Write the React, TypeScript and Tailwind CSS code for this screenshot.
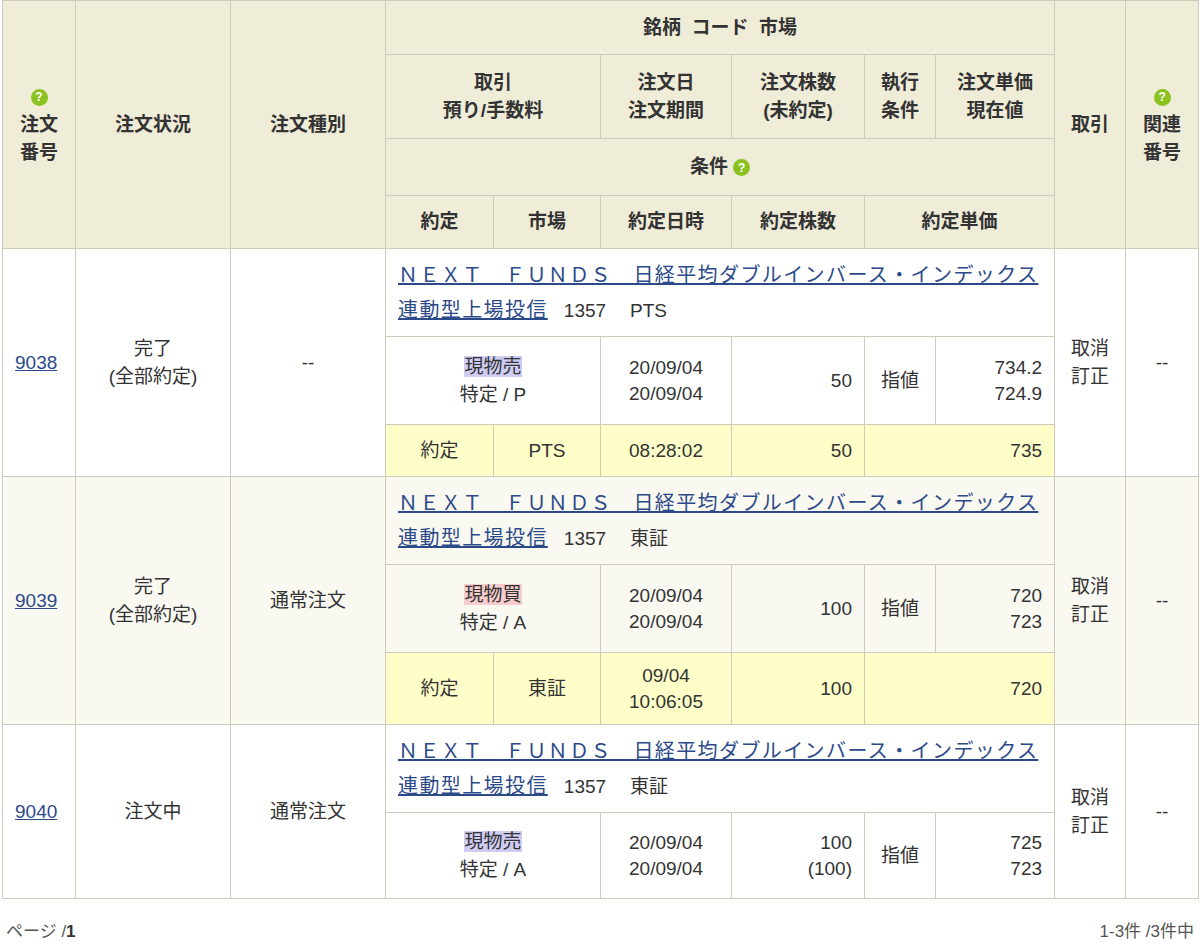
import React from 'react';

const th = 'border border-[#cfcbbb] bg-[#efecd8] font-semibold text-[#333] text-center align-middle';
const td = 'border border-[#cfcbbb] align-middle';

const Q = () => (
  <span className="inline-flex w-[17px] h-[17px] rounded-full bg-[#8cc21f] text-white text-[12px] font-bold items-center justify-center leading-none align-middle">?</span>
);

interface Order {
  no: string;
  status: string[];
  kind: string;
  market: string;
  side: string;
  sell: boolean;
  acct: string;
  qty: string[];
  price: string[];
  fill?: { market: string; time: string[]; qty: string; price: string };
  tint: boolean;
}

const ORDERS: Order[] = [
  { no: '9038', status: ['完了', '(全部約定)'], kind: '--', market: 'PTS', side: '現物売', sell: true, acct: '特定 / P', qty: ['50'], price: ['734.2', '724.9'], fill: { market: 'PTS', time: ['08:28:02'], qty: '50', price: '735' }, tint: false },
  { no: '9039', status: ['完了', '(全部約定)'], kind: '通常注文', market: '東証', side: '現物買', sell: false, acct: '特定 / A', qty: ['100'], price: ['720', '723'], fill: { market: '東証', time: ['09/04', '10:06:05'], qty: '100', price: '720' }, tint: true },
  { no: '9040', status: ['注文中'], kind: '通常注文', market: '東証', side: '現物売', sell: true, acct: '特定 / A', qty: ['100', '(100)'], price: ['725', '723'], tint: false },
];

function Rows({ o }: { o: Order }) {
  const bg = o.tint ? 'bg-[#f9f8f1]' : 'bg-white';
  const span = o.fill ? 3 : 2;
  return (
    <>
      <tr className="h-[88px]">
        <td rowSpan={span} className={`${td} ${bg} px-3`}>
          <a className="text-[#2c4a8a] underline">{o.no}</a>
        </td>
        <td rowSpan={span} className={`${td} ${bg} text-center`}>
          {o.status.map((s) => <div key={s}>{s}</div>)}
        </td>
        <td rowSpan={span} className={`${td} ${bg} text-center`}>{o.kind}</td>
        <td colSpan={6} className={`${td} ${bg} px-3 leading-[34px]`}>
          <a className="text-[#2c4a8a] underline text-[20px] tracking-[1.4px]">ＮＥＸＴ　ＦＵＮＤＳ　日経平均ダブルインバース・インデックス連動型上場投信</a>
          <span className="ml-4">1357</span>
          <span className="ml-6">{o.market}</span>
        </td>
        <td rowSpan={span} className={`${td} ${bg} text-center`}>
          <div>取消</div><div>訂正</div>
        </td>
        <td rowSpan={span} className={`${td} ${bg} text-center`}>--</td>
      </tr>
      <tr className={o.fill ? 'h-[88px]' : 'h-[86px]'}>
        <td colSpan={2} className={`${td} ${bg} text-center`}>
          <div><span className={o.sell ? 'bg-[#cfccf3]' : 'bg-[#f6cccc]'}>{o.side}</span></div>
          <div>{o.acct}</div>
        </td>
        <td className={`${td} ${bg} text-center leading-[26px]`}><div>20/09/04</div><div>20/09/04</div></td>
        <td className={`${td} ${bg} text-right px-3 leading-[26px]`}>{o.qty.map((q) => <div key={q}>{q}</div>)}</td>
        <td className={`${td} ${bg} text-center`}>指値</td>
        <td className={`${td} ${bg} text-right px-3 leading-[26px]`}>{o.price.map((q) => <div key={q}>{q}</div>)}</td>
      </tr>
      {o.fill && (
        <tr className={o.fill.time.length > 1 ? 'h-[72px]' : 'h-[52px]'}>
          <td className={`${td} bg-[#fefec8] text-center`}>約定</td>
          <td className={`${td} bg-[#fefec8] text-center`}>{o.fill.market}</td>
          <td className={`${td} bg-[#fefec8] text-center leading-[26px]`}>{o.fill.time.map((t) => <div key={t}>{t}</div>)}</td>
          <td className={`${td} bg-[#fefec8] text-right px-3`}>{o.fill.qty}</td>
          <td colSpan={2} className={`${td} bg-[#fefec8] text-right px-3`}>{o.fill.price}</td>
        </tr>
      )}
    </>
  );
}

export default function App() {
  return (
    <div className="w-[1200px] h-[944px] bg-white text-[#333] text-[19px] px-[2px]" style={{ fontFamily: '"Liberation Sans", "Noto Sans CJK JP", sans-serif' }}>
      <table className="border-collapse w-[1196px] table-fixed leading-[28px]">
        <colgroup>
          <col className="w-[73px]" /><col className="w-[155px]" /><col className="w-[155px]" />
          <col className="w-[108px]" /><col className="w-[107px]" /><col className="w-[131px]" />
          <col className="w-[133px]" /><col className="w-[71px]" /><col className="w-[119px]" />
          <col className="w-[71px]" /><col className="w-[73px]" />
        </colgroup>
        <thead>
          <tr className="h-[54px]">
            <th rowSpan={4} className={th}><Q /><div>注文</div><div>番号</div></th>
            <th rowSpan={4} className={th}>注文状況</th>
            <th rowSpan={4} className={th}>注文種別</th>
            <th colSpan={6} className={th}>銘柄&nbsp;&nbsp;コード&nbsp;&nbsp;市場</th>
            <th rowSpan={4} className={th}>取引</th>
            <th rowSpan={4} className={th}><Q /><div>関連</div><div>番号</div></th>
          </tr>
          <tr className="h-[84px]">
            <th colSpan={2} className={th}><div>取引</div><div>預り/手数料</div></th>
            <th className={th}><div>注文日</div><div>注文期間</div></th>
            <th className={th}><div>注文株数</div><div>(未約定)</div></th>
            <th className={th}><div>執行</div><div>条件</div></th>
            <th className={th}><div>注文単価</div><div>現在値</div></th>
          </tr>
          <tr className="h-[57px]">
            <th colSpan={6} className={th}>条件 <Q /></th>
          </tr>
          <tr className="h-[53px]">
            <th className={th}>約定</th>
            <th className={th}>市場</th>
            <th className={th}>約定日時</th>
            <th className={th}>約定株数</th>
            <th colSpan={2} className={th}>約定単価</th>
          </tr>
        </thead>
        <tbody>
          {ORDERS.map((o) => <Rows key={o.no} o={o} />)}
        </tbody>
      </table>
      <div className="flex justify-between items-center mt-[20px] text-[17px] text-[#555] px-1">
        <span>ページ /<b className="text-[#333]">1</b></span>
        <span>1-3件 /3件中</span>
      </div>
    </div>
  );
}
